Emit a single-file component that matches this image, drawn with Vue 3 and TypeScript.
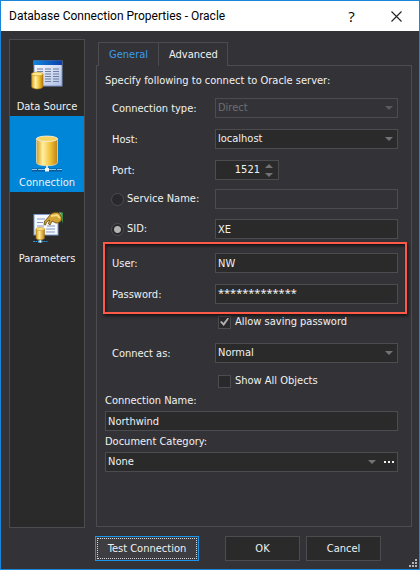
<script setup lang="ts">
import { ref } from 'vue'

type Page = 'source' | 'connection' | 'parameters'

const pages: { id: Page; label: string }[] = [
  { id: 'source', label: 'Data Source' },
  { id: 'connection', label: 'Connection' },
  { id: 'parameters', label: 'Parameters' },
]
const tabs: string[] = ['General', 'Advanced']

const page = ref<Page>('connection')
const tab = ref('General')
const host = ref('localhost')
const port = ref('1521')
const target = ref('sid')
const serviceName = ref('')
const sid = ref('XE')
const user = ref('NW')
const password = ref('*************')
const savePassword = ref(true)
const showAll = ref(false)
const role = ref('Normal')
const connectionName = ref('Northwind')
const category = ref('None')

function stepPort(delta: number) {
  port.value = String(Number(port.value) + delta)
}
</script>

<template>
  <div class="window">
    <header class="titlebar">
      <h1>Database Connection Properties - Oracle</h1>
      <button type="button" class="caption help" aria-label="Help">?</button>
      <button type="button" class="caption" aria-label="Close">
        <svg width="11" height="11" viewBox="0 0 11 11"><path d="M.5.5l10 10M10.500.5l-10 10" stroke="#222" stroke-width="1.100" fill="none" /></svg>
      </button>
    </header>

    <div class="body">
      <nav class="sidebar">
        <button
          v-for="p in pages"
          :key="p.id"
          type="button"
          class="page"
          :class="{ active: page === p.id }"
          @click="page = p.id"
        >
          <svg v-if="p.id === 'source'" width="32" height="32" viewBox="0 0 32 32">
            <defs>
              <linearGradient id="gold1" x1="0" x2="1"><stop offset="0" stop-color="#d89a1c" /><stop offset=".35" stop-color="#fff3a8" /><stop offset=".65" stop-color="#f3c436" /><stop offset="1" stop-color="#b97a0c" /></linearGradient>
              <linearGradient id="sheet1" x1="0" y1="0" x2="1" y2="1"><stop offset="0" stop-color="#fff" /><stop offset="1" stop-color="#aebfe8" /></linearGradient>
              <linearGradient id="bar1" x1="0" x2="1"><stop offset="0" stop-color="#1287e0" /><stop offset="1" stop-color="#0a3fa8" /></linearGradient>
            </defs>
            <rect x="3" y="2" width="28" height="25" fill="url(#sheet1)" stroke="#7d92c4" />
            <rect x="2.500" y="1.500" width="28.500" height="4.500" fill="url(#bar1)" />
            <path d="M6 10h6M6 12.500h6M6 15h6M14 10h6M14 12.500h6M14 15h6M14 17.500h6M14 20h6M14 22.500h6M22 10h6M22 12.500h6M22 15h6M22 17.500h6M22 20h6M22 22.500h6" stroke="#6f7f9f" />
            <path d="M.5 15v12.500c0 3.300 11.500 3.300 11.500 0V15z" fill="url(#gold1)" stroke="#a8740e" stroke-width=".6" />
            <ellipse cx="6.250" cy="15" rx="5.750" ry="1.800" fill="#ffe98c" stroke="#c8901c" stroke-width=".6" />
          </svg>
          <svg v-else-if="p.id === 'connection'" width="32" height="38" viewBox="0 0 32 38">
            <defs>
              <linearGradient id="gold2" x1="0" x2="1"><stop offset="0" stop-color="#d99b20" /><stop offset=".3" stop-color="#fff0a0" /><stop offset=".65" stop-color="#f2c23a" /><stop offset="1" stop-color="#c18212" /></linearGradient>
            </defs>
            <path d="M1 35h30" stroke="#0b5c9c" stroke-width="3" />
            <path d="M1 34.500h5M7 34.500h18M26 34.500h5" stroke="#8fc8ee" />
            <path d="M16 29v4" stroke="#d5dde4" stroke-width="2" />
            <rect x="14" y="33" width="4" height="3.500" fill="#f4fafd" />
            <path d="M5.500 3.500v24c0 4.300 21 4.300 21 0v-24z" fill="url(#gold2)" stroke="#e7dcae" stroke-width=".8" />
            <ellipse cx="16" cy="3.800" rx="10.500" ry="2.700" fill="#f8d460" stroke="#f3ead0" />
          </svg>
          <svg v-else width="32" height="32" viewBox="0 0 32 32">
            <defs>
              <linearGradient id="gold3" x1="0" x2="1"><stop offset="0" stop-color="#d99b20" /><stop offset=".4" stop-color="#ffec94" /><stop offset="1" stop-color="#bd7d10" /></linearGradient>
              <linearGradient id="green3" x1="0" x2="1"><stop offset="0" stop-color="#b7dfc0" /><stop offset="1" stop-color="#26843b" /></linearGradient>
            </defs>
            <rect x="3" y="3.500" width="24" height="20.500" fill="#f6f9ff" stroke="#7f9bcc" />
            <path d="M6 8h8M6 11.500h6M6 15h7M16 15h8M15 18h9M15 21h9" stroke="#8097be" stroke-width="1.200" />
            <path d="M28 1.500h4v11z" fill="url(#green3)" />
            <path d="M13 11l7-8c3-2 7-2 9 0l2 5c-1 3-4 4-6 4l-4-2-2 4-1.500-1 1-4-3 2-1 3-1.500-.5.500-3z" fill="#d3a338" stroke="#76540f" stroke-width=".9" />
            <path d="M20 5l6-1 3 3" stroke="#f7dd83" stroke-width="1.800" fill="none" />
            <path d="M5 18v9c0 2.500 8.500 2.500 8.500 0v-9z" fill="url(#gold3)" stroke="#9c6d10" stroke-width=".6" />
            <ellipse cx="9.250" cy="18" rx="4.250" ry="1.500" fill="#ffe684" stroke="#bc8718" stroke-width=".6" />
            <path d="M2 30.500h4M12.500 30.500h4" stroke="#2695d6" stroke-dasharray="2 .7" />
            <path d="M9.250 29v1" stroke="#ccc" />
            <path d="M7 30.500h4.500" stroke="#58b8ee" stroke-width="2" /><rect x="8.500" y="29.500" width="1.500" height="2" fill="#fff" />
          </svg>
          <span>{{ p.label }}</span>
        </button>
      </nav>

      <main class="content">
        <div class="tabs" role="tablist">
          <button
            v-for="t in tabs"
            :key="t"
            type="button"
            role="tab"
            class="tab"
            :class="{ current: tab === t }"
            :aria-selected="tab === t"
            @click="tab = t"
          >{{ t }}</button>
          <span class="rest"></span>
        </div>

        <form id="settings" class="panel" @submit.prevent>
          <p class="intro">Specify following to connect to Oracle server:</p>

          <div class="row">
            <label for="type">Connection type:</label>
            <div class="combo disabled"><select id="type" disabled><option>Direct</option></select></div>
          </div>
          <div class="row">
            <label for="host">Host:</label>
            <div class="combo"><select id="host" v-model="host"><option>localhost</option></select></div>
          </div>
          <div class="row tight">
            <label for="port">Port:</label>
            <div class="spinner">
              <input id="port" v-model="port" type="text" inputmode="numeric" />
              <div class="steps">
                <button type="button" class="up" aria-label="Increase port" @click="stepPort(1)"></button>
                <button type="button" class="down" aria-label="Decrease port" @click="stepPort(-1)"></button>
              </div>
            </div>
          </div>
          <div class="row option">
            <label class="choice"><input v-model="target" type="radio" name="target" value="service" />Service Name:</label>
            <input v-model="serviceName" class="field" type="text" aria-label="Service name value" disabled />
          </div>
          <div class="row option">
            <label class="choice"><input v-model="target" type="radio" name="target" value="sid" />SID:</label>
            <input v-model="sid" class="field" type="text" aria-label="SID value" />
          </div>

          <div class="credentials">
            <div class="row">
              <label for="user">User:</label>
              <input id="user" v-model="user" class="field" type="text" />
            </div>
            <div class="row">
              <label for="password">Password:</label>
              <input id="password" v-model="password" class="field secret" type="text" autocomplete="off" />
            </div>
          </div>

          <label class="check"><input v-model="savePassword" type="checkbox" />Allow saving password</label>
          <div class="row">
            <label for="role">Connect as:</label>
            <div class="combo"><select id="role" v-model="role"><option>Normal</option></select></div>
          </div>
          <label class="check"><input v-model="showAll" type="checkbox" />Show All Objects</label>

          <div class="stack">
            <label for="name">Connection Name:</label>
            <input id="name" v-model="connectionName" class="field" type="text" />
            <label for="category">Document Category:</label>
            <div class="picker">
              <div class="combo"><select id="category" v-model="category"><option>None</option></select></div>
              <button type="button" class="more" aria-label="Browse categories"><i></i><i></i><i></i></button>
            </div>
          </div>
        </form>
      </main>
    </div>

    <footer class="footer">
      <button type="button" class="button test">Test Connection</button>
      <button type="submit" form="settings" class="button ok">OK</button>
      <button type="button" class="button">Cancel</button>
      <svg class="grip" width="8" height="8" viewBox="0 0 8 8" fill="#b4b4b6">
        <path d="M6 0h2v2H6zM6 3h2v2H6zM3 3h2v2H3zM6 6h2v2H6zM3 6h2v2H3zM0 6h2v2H0z" />
      </svg>
    </footer>
  </div>
</template>

<style>
body {
  background: #333337;
}
</style>

<style scoped>
* {
  box-sizing: border-box;
}

.window {
  display: flex;
  flex-direction: column;
  min-height: 100vh;
  border: 1px solid #1a86da;
  background: #333337;
  color: #f1f1f1;
  font: 11px/14px "DejaVu Sans Condensed", "DejaVu Sans", sans-serif;
}

button,
input,
select {
  margin: 0;
  padding: 0;
  border: 0;
  border-radius: 0;
  background: none;
  color: inherit;
  font: inherit;
  outline: none;
  appearance: none;
}

.titlebar {
  display: flex;
  align-items: center;
  height: 30px;
  padding-left: 8px;
  background: #fff;
  color: #000;
}

h1 {
  flex: 1;
  margin: 0;
  font: 12px/16px Roboto, sans-serif;
}

.caption {
  display: flex;
  align-items: center;
  justify-content: center;
  width: 45px;
  height: 30px;
}

.help {
  font: 15px/16px "Open Sans", sans-serif;
}

.body {
  display: flex;
  flex: 1;
  gap: 11px;
  padding: 8px 7px 0 8px;
}

.sidebar {
  display: flex;
  flex-direction: column;
  width: 76px;
  border: 1px solid #4b4b50;
  background: #2a2a2a;
}

.page {
  display: flex;
  flex-direction: column;
  align-items: center;
  justify-content: flex-end;
  gap: 9px;
  height: 76px;
  padding-bottom: 2px;
}

.page.active {
  gap: 3px;
  background: #0086d8;
}

.content {
  display: flex;
  flex: 1;
  flex-direction: column;
  min-width: 0;
  padding-top: 3px;
}

.tabs {
  display: flex;
  height: 24px;
}

.tabs::before {
  content: "";
  width: 2px;
  border-bottom: 1px solid #4b4b50;
}

.tab {
  padding: 0 10px;
  border: 1px solid #4b4b50;
  border-width: 1px 0 0 1px;
}

.tab:last-of-type {
  padding-right: 9px;
  border-right-width: 1px;
}

.current {
  color: #3a9cf0;
}

.rest {
  flex: 1;
  border-bottom: 1px solid #4b4b50;
}

.panel {
  display: flex;
  flex: 1;
  flex-direction: column;
  margin-bottom: 1px;
  padding: 8px 13px 16px 8px;
  border: 1px solid #4b4b50;
  border-top: 0;
}

.intro {
  margin: 0 0 10px;
}

.row {
  display: grid;
  grid-template-columns: 103px 1fr;
  align-items: center;
  margin: 0 0 11px 7px;
}

.row > label {
  padding-top: 2px;
}

.row.tight {
  margin-bottom: 9px;
}

.row.option {
  margin-bottom: 10px;
}

.field,
.combo,
.spinner,
.picker {
  height: 20px;
  border: 1px solid #4b4b50;
  background: #2a2a2a;
}

.field {
  width: 100%;
  padding: 0 2px;
}

.field:disabled,
.disabled {
  background: #333337;
}

.secret {
  padding-bottom: 4px;
  font-family: "Noto Sans", sans-serif;
}

.combo {
  display: flex;
  position: relative;
}

.combo select {
  flex: 1;
  padding: 0 22px 0 2px;
}

.combo select:disabled {
  color: #6e6e72;
  opacity: 1;
}

.combo::after {
  content: "";
  position: absolute;
  top: 7px;
  right: 4px;
  border: 4px solid transparent;
  border-top-color: #737376;
  border-bottom: 0;
  pointer-events: none;
}

.disabled::after {
  border-top-color: #5a5a5e;
}

.spinner {
  display: flex;
  width: 64px;
}

.spinner input {
  flex: 1;
  min-width: 0;
  text-align: right;
}

.steps {
  display: flex;
  flex-direction: column;
  align-items: center;
  justify-content: center;
  gap: 5px;
  width: 18px;
}

.steps button {
  border: 4px solid transparent;
}

.steps .up {
  border-top: 0;
  border-bottom-color: #737376;
}

.steps .down {
  border-top-color: #737376;
  border-bottom: 0;
}

.row > .choice {
  display: flex;
  align-items: center;
  gap: 3px;
  margin-left: -1px;
  padding-top: 0;
}

.choice input {
  width: 13px;
  height: 13px;
  border: 1px solid #4b4b50;
  border-radius: 50%;
  background: #29292b;
}

.choice input:checked {
  background: radial-gradient(circle, #b2b2b2 3px, #29292b 4px);
}

.credentials {
  position: relative;
  padding-top: 4px;
}

.credentials::after {
  content: "";
  position: absolute;
  inset: -7px -9px 1px -2px;
  border: 2px solid #ff5a48;
  box-shadow: 1px 2px 3px #0009, inset 1px 2px 3px #0009;
  pointer-events: none;
}

.check {
  display: flex;
  align-items: center;
  gap: 4px;
  margin: 0 0 14px 113px;
}

.check input {
  display: grid;
  place-items: center;
  width: 13px;
  height: 13px;
  border: 1px solid #4b4b50;
  background: #29292b;
}

.check input:checked::after {
  content: "";
  width: 9px;
  height: 9px;
  background: #b2b2b2;
  clip-path: polygon(0 50%, 18% 40%, 38% 62%, 85% 0, 100% 10%, 42% 95%);
}

.stack {
  display: flex;
  flex-direction: column;
  margin-top: -8px;
}

.stack label {
  margin-bottom: 3px;
}

.stack .field {
  margin-bottom: 4px;
}

.picker {
  display: flex;
}

.picker .combo {
  flex: 1;
  height: 18px;
  border: 0;
}

.more {
  display: flex;
  align-items: center;
  justify-content: center;
  gap: 2px;
  width: 17px;
}

.more i {
  width: 2px;
  height: 2px;
  background: #f1f1f1;
}

.footer {
  display: flex;
  position: relative;
  gap: 6px;
  padding: 8px 38px 8px 94px;
}

.button {
  width: 75px;
  height: 25px;
  border: 1px solid #4b4b50;
  background: #2a2a2a;
}

.test {
  width: 104px;
  margin-right: auto;
  border-color: #1b95ec;
  background: #3e3e42;
  outline: 1px dotted #d8d8d8;
  outline-offset: -3px;
}

.grip {
  position: absolute;
  right: 2px;
  bottom: 2px;
}
</style>
